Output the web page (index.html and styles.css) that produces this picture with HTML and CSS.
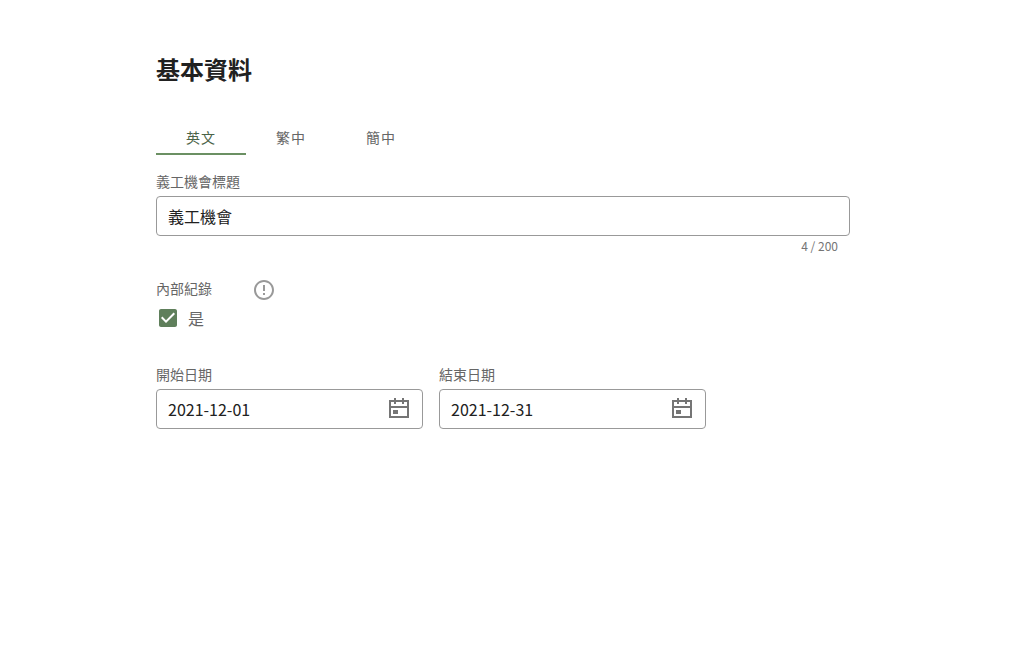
FILE: index.html
```html
<!DOCTYPE html>
<html lang="zh-Hant">
<head>
    <meta charset="UTF-8">
    <meta name="viewport" content="width=device-width, initial-scale=1.0">
    <title>基本資料</title>
    <link rel="stylesheet" href="styles.css">
</head>
<body>

    <main class="container">
        <h1>基本資料</h1>

        <div class="tabs" role="tablist">
            <button type="button" class="tab active" role="tab" aria-selected="true">英文</button>
            <button type="button" class="tab" role="tab" aria-selected="false">繁中</button>
            <button type="button" class="tab" role="tab" aria-selected="false">簡中</button>
        </div>

        <form>
            <div class="field">
                <label class="field-label" for="title">義工機會標題</label>
                <input class="text-input" type="text" id="title" value="義工機會" maxlength="200">
                <p class="counter">4 / 200</p>
            </div>

            <fieldset class="record">
                <legend class="record-head">
                    <span class="field-label">內部紀錄</span>
                    <svg class="icon" viewBox="0 0 24 24" aria-hidden="true">
                        <path d="M11 15h2v2h-2zm0-8h2v6h-2zm.99-5C6.47 2 2 6.48 2 12s4.47 10 9.99 10C17.52 22 22 17.52 22 12S17.52 2 11.99 2zM12 20c-4.42 0-8-3.58-8-8s3.58-8 8-8 8 3.58 8 8-3.58 8-8 8z"/>
                    </svg>
                </legend>
                <div class="check-row">
                    <span class="check">
                        <input type="checkbox" id="internal" checked>
                        <svg viewBox="0 0 24 24" aria-hidden="true">
                            <path d="M19 3H5c-1.11 0-2 .9-2 2v14c0 1.1.89 2 2 2h14c1.11 0 2-.9 2-2V5c0-1.1-.89-2-2-2zm-9 14l-5-5 1.41-1.41L10 14.17l7.59-7.59L19 8l-9 9z"/>
                        </svg>
                    </span>
                    <label for="internal">是</label>
                </div>
            </fieldset>

            <div class="dates">
                <div class="field">
                    <label class="field-label" for="startDate">開始日期</label>
                    <div class="date-box">
                        <input type="text" id="startDate" value="2021-12-01">
                        <button type="button" class="date-btn" aria-label="選擇開始日期">
                            <svg viewBox="0 0 24 24" aria-hidden="true">
                                <path d="M2 3h20v18H2zM4 5v4h16V5zM4 11v8h16v-8zM6 13h5v4H6z" fill-rule="evenodd"/>
                                <path d="M7 1h2v6H7zM15 1h2v6h-2z"/>
                            </svg>
                        </button>
                    </div>
                </div>
                <div class="field">
                    <label class="field-label" for="endDate">結束日期</label>
                    <div class="date-box">
                        <input type="text" id="endDate" value="2021-12-31">
                        <button type="button" class="date-btn" aria-label="選擇結束日期">
                            <svg viewBox="0 0 24 24" aria-hidden="true">
                                <path d="M2 3h20v18H2zM4 5v4h16V5zM4 11v8h16v-8zM6 13h5v4H6z" fill-rule="evenodd"/>
                                <path d="M7 1h2v6H7zM15 1h2v6h-2z"/>
                            </svg>
                        </button>
                    </div>
                </div>
            </div>
        </form>
    </main>

</body>
</html>
```

FILE: styles.css
```css
* {
    box-sizing: border-box;
}
body {
    margin: 0;
    background: #fff;
    color: #212121;
    font-family: "Noto Sans CJK TC", sans-serif;
}
input, button {
    font-family: inherit;
    color: inherit;
}
.container {
    padding: 51px 163px 51px 156px;
}
h1 {
    margin: 0 0 34px;
    font-size: 24px;
    line-height: 36px;
    font-weight: 700;
}
.tabs {
    display: flex;
    margin-bottom: 15px;
}
.tab {
    width: 90px;
    height: 34px;
    padding: 0 0 1px;
    border: none;
    border-bottom: 2px solid transparent;
    background: none;
    color: #666;
    font-size: 14px;
    letter-spacing: 1px;
    cursor: pointer;
}
.tab.active {
    color: #4a6347;
    border-bottom-color: #6b9063;
}
.field {
    display: flex;
    flex-direction: column;
}
.field-label {
    color: #666;
    font-size: 14px;
    line-height: 22px;
    margin-bottom: 4px;
}
.text-input, .date-box {
    width: 100%;
    height: 40px;
    border: 1px solid #999;
    border-radius: 4px;
    background: #fff;
}
.text-input {
    padding: 0 11px;
    font-size: 16px;
}
.counter {
    margin: 0;
    padding: 0 12px;
    color: #757575;
    font-size: 12px;
    line-height: 20px;
    text-align: right;
}
.record {
    margin: 21px 0 33px;
    padding: 0;
    border: none;
}
.record-head {
    display: flex;
    align-items: center;
    gap: 40px;
    padding: 0;
}
.icon {
    width: 24px;
    height: 24px;
    fill: #999;
}
.check-row {
    display: flex;
    align-items: center;
    gap: 8px;
    margin-top: 3px;
    color: #666;
    font-size: 16px;
    line-height: 24px;
}
.check {
    display: grid;
    width: 24px;
    height: 24px;
}
.check input, .check svg {
    grid-area: 1 / 1;
    width: 24px;
    height: 24px;
    margin: 0;
}
.check input {
    appearance: none;
    cursor: pointer;
}
.check svg {
    fill: #5f7f5b;
    pointer-events: none;
}
.check input:not(:checked) + svg {
    opacity: 0.4;
}
.dates {
    display: grid;
    grid-template-columns: repeat(2, minmax(0, 267px));
    gap: 16px;
}
.date-box {
    display: flex;
    align-items: center;
    padding: 0 11px;
}
.date-box input {
    flex: 1;
    min-width: 0;
    padding: 0;
    border: none;
    outline: none;
    background: none;
    font-size: 16px;
}
.date-btn {
    width: 24px;
    height: 24px;
    padding: 0;
    border: none;
    background: none;
    cursor: pointer;
}
.date-btn svg {
    display: block;
    width: 24px;
    height: 24px;
    fill: #757575;
}
```
